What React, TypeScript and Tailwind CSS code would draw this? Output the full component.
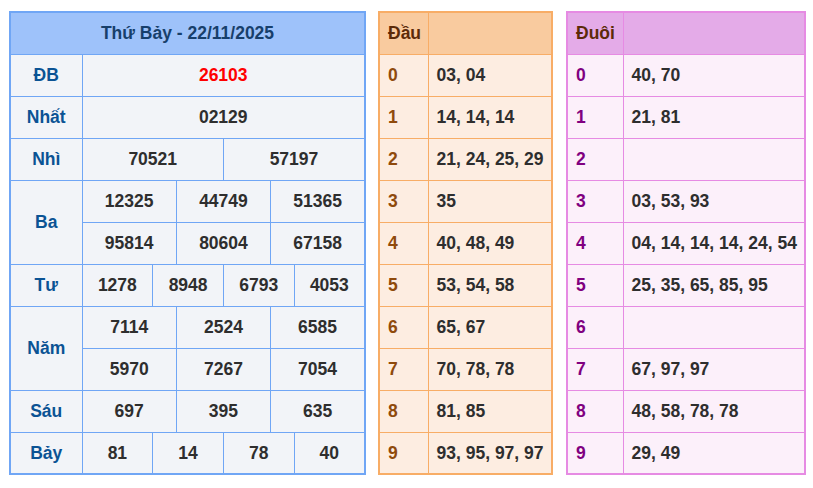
const prizes: { label: string; rows: string[][] }[] = [
  { label: 'ĐB', rows: [['26103']] },
  { label: 'Nhất', rows: [['02129']] },
  { label: 'Nhì', rows: [['70521', '57197']] },
  { label: 'Ba', rows: [['12325', '44749', '51365'], ['95814', '80604', '67158']] },
  { label: 'Tư', rows: [['1278', '8948', '6793', '4053']] },
  { label: 'Năm', rows: [['7114', '2524', '6585'], ['5970', '7267', '7054']] },
  { label: 'Sáu', rows: [['697', '395', '635']] },
  { label: 'Bảy', rows: [['81', '14', '78', '40']] },
]

const dau = ['03, 04', '14, 14, 14', '21, 24, 25, 29', '35', '40, 48, 49', '53, 54, 58', '65, 67', '70, 78, 78', '81, 85', '93, 95, 97, 97']
const duoi = ['40, 70', '21, 81', '', '03, 53, 93', '04, 14, 14, 14, 24, 54', '25, 35, 65, 85, 95', '', '67, 97, 97', '48, 58, 78, 78', '29, 49']

// 12 sub-columns so 1/2/3/4 cells per row all split evenly
const span: Record<number, number> = { 1: 12, 2: 6, 3: 4, 4: 3 }

function ResultTable() {
  return (
    <table className="table-fixed border-collapse border-2 border-[#70a6f5] w-[357px] bg-[#f2f4f8]">
      <colgroup>
        <col className="w-[72px]" />
        {Array.from({ length: 12 }).map((_, i) => (
          <col key={i} />
        ))}
      </colgroup>
      <thead>
        <tr className="h-[42px]">
          <th colSpan={13} className="bg-[#9ec2fa] border border-[#70a6f5] text-[#173f6b] font-bold">
            Thứ Bảy - 22/11/2025
          </th>
        </tr>
      </thead>
      <tbody>
        {prizes.map((p) =>
          p.rows.map((row, ri) => (
            <tr key={p.label + ri} className="h-[42px]">
              {ri === 0 && (
                <td rowSpan={p.rows.length} className="border border-[#70a6f5] text-center font-bold text-[#0b5394]">
                  {p.label}
                </td>
              )}
              {row.map((n, i) => (
                <td
                  key={i}
                  colSpan={span[row.length]}
                  className={`border border-[#70a6f5] text-center font-bold ${p.label === 'ĐB' ? 'text-[#ff0000]' : 'text-[#2e2e2e]'}`}
                >
                  {n}
                </td>
              ))}
            </tr>
          )),
        )}
      </tbody>
    </table>
  )
}

function LotoTable({ title, values, variant }: { title: string; values: string[]; variant: 'dau' | 'duoi' }) {
  const orange = variant === 'dau'
  const border = orange ? 'border-[#f8ad66]' : 'border-[#e68be3]'
  return (
    <table
      className={`table-fixed border-collapse border-2 ${border} ${orange ? 'w-[175px] bg-[#fdede1]' : 'w-[240px] bg-[#fcf0fa]'}`}
    >
      <colgroup>
        <col className={orange ? 'w-[49px]' : 'w-[56px]'} />
        <col />
      </colgroup>
      <thead>
        <tr className={`h-[42px] ${orange ? 'bg-[#f9cb9f]' : 'bg-[#e4abe8]'}`}>
          <th className={`border ${border} text-left pl-2 font-bold text-[#5c2a08]`}>{title}</th>
          <th className={`border ${border}`}></th>
        </tr>
      </thead>
      <tbody>
        {values.map((v, i) => (
          <tr key={i} className="h-[42px]">
            <td className={`border ${border} pl-2 font-bold ${orange ? 'text-[#8f4a0c]' : 'text-[#800080]'}`}>{i}</td>
            <td className={`border ${border} pl-2 font-bold text-[#2e2e2e] whitespace-nowrap`}>{v}</td>
          </tr>
        ))}
      </tbody>
    </table>
  )
}

export default function App() {
  return (
    <div className="bg-white w-[813px] h-[488px] pt-[11px] pl-[9px] font-['Liberation_Sans',Arial,sans-serif] text-[17.5px]">
      <div className="flex items-start">
        <ResultTable />
        <div className="ml-[12px]">
          <LotoTable title="Đầu" values={dau} variant="dau" />
        </div>
        <div className="ml-[13px]">
          <LotoTable title="Đuôi" values={duoi} variant="duoi" />
        </div>
      </div>
    </div>
  )
}
